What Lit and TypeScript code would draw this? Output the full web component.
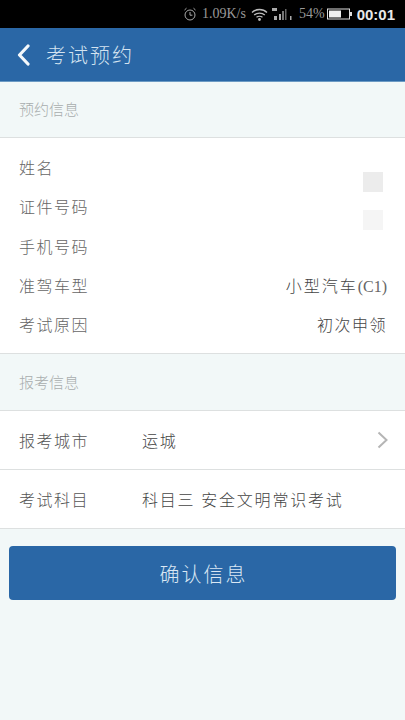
import { LitElement, html, css } from "lit";
import { customElement } from "lit/decorators.js";

@customElement("app-root")
export class AppRoot extends LitElement {
  static styles = css`
    :host { display: block; width: 405px; height: 720px; background: #f2f8f8; overflow: hidden;
      font-family: "Liberation Serif", "Noto Sans CJK SC", serif; font-weight: 300; color: #555; }
    .status { height: 28px; background: #000; display: flex; align-items: center; justify-content: flex-end; padding-right: 10px; color: #aaa; box-sizing: border-box; }
    .status .t { font: 14px "Liberation Serif", serif; color: #999; }
    .status .clock { font: bold 15px "Liberation Sans", sans-serif; color: #e8e8e8; margin-left: 5px; }
    .status svg { display: block; }
    .alarm { margin-right: 5px; }
    .wifi { margin: 0 4px 0 5px; }
    .sig { margin-right: 7px; }
    .bat { margin-left: 2px; }
    .head { height: 53px; background: #2a67a6; border-bottom: 1px solid #6d9bc4; display: flex; align-items: center; color: #d4e3f0; font-size: 20px; letter-spacing: 2px; padding-left: 17px; gap: 16px; }
    .sec { height: 56px; display: flex; align-items: center; padding: 0 0 2px 19px; font-size: 15px; color: #a8adad; border-bottom: 1px solid #dde0e0; box-sizing: border-box; }
    .sec.two { height: 57px; }
    .info { background: #fff; border-bottom: 1px solid #dde0e0; height: 216px; box-sizing: border-box; padding: 9px 19px 9px; display: flex; flex-direction: column; position: relative; }
    .row { flex: 1; display: flex; justify-content: space-between; align-items: center; font-size: 16px; letter-spacing: 1.5px; color: #666; }
    .row .v { color: #444; letter-spacing: 2px; margin-right: -1px; }
    .row .v.n { letter-spacing: 1.5px; }
    .row .v .lat { letter-spacing: 0; color: #666; }
    .sq { position: absolute; left: 363px; width: 20px; height: 20px; }
    .s1 { top: 34px; background: #ececec; }
    .s2 { top: 72px; background: #f5f5f5; }
    .form { background: #fff; }
    .f { height: 59px; box-sizing: border-box; border-bottom: 1px solid #dde0e0; display: flex; align-items: center; padding: 0 17px 0 19px; font-size: 16px; letter-spacing: 1.5px; color: #555; }
    .f .l { width: 123px; flex: none; }
    .f .c { flex: 1; color: #444; letter-spacing: 1.8px; }
    .btn { margin: 17px 9px 0; height: 54px; background: #2a67a6; border-radius: 4px; display: flex; align-items: center; justify-content: center; color: #dbe8f4; font-size: 20px; letter-spacing: 2px; }
    .btn span { margin-left: 2px; }
  `;

  render() {
    return html`
      <div class="status">
        <svg class="alarm" width="14" height="14" viewBox="0 0 14 14" fill="none" stroke="#aaa" stroke-width="1"><circle cx="7" cy="8" r="5"/><path d="M7 5v3.2h2.4M1.5 3 3.500 1.200M12.500 3l-2-1.800"/></svg>
        <span class="t">1.09K/s</span>
        <svg class="wifi" width="17" height="13" viewBox="0 0 17 13" fill="none" stroke="#bbb" stroke-width="1.300"><path d="M1 4.500c4-4 11-4 15 0M3.200 7c2.800-2.600 7.800-2.600 10.600 0M5.500 9.300c1.600-1.300 4.400-1.300 6 0"/><circle cx="8.500" cy="11.500" r=".8" fill="#bbb"/></svg>
        <svg class="sig" width="20" height="14" viewBox="0 0 20 14" fill="#aaa"><rect x="0" y="1" width="5" height="3"/><rect x="2" y="9" width="3" height="4"/><rect x="7" y="7" width="2" height="6"/><rect x="10" y="4" width="2" height="9" fill="#777"/><rect x="13" y="2" width="1.500" height="11" fill="#666"/><rect x="18" y="9" width="1.500" height="4"/></svg>
        <span class="t">54%</span>
        <svg class="bat" width="25" height="12" viewBox="0 0 25 12"><rect x=".5" y="1" width="22" height="10" fill="none" stroke="#ddd"/><rect x="2" y="2.500" width="12" height="7" fill="#eee"/><rect x="23" y="4" width="2" height="4" fill="#ddd"/></svg>
        <span class="clock">00:01</span>
      </div>
      <div class="head">
        <svg width="13" height="22" viewBox="0 0 13 22" fill="none" stroke="#f4f8fb" stroke-width="3.200" stroke-linecap="round" stroke-linejoin="round"><path d="M11 2 2.500 11 11 20"/></svg>
        <span>考试预约</span>
      </div>
      <div class="sec">预约信息</div>
      <div class="info">
        <div class="row"><span>姓名</span></div>
        <div class="row"><span>证件号码</span></div>
        <div class="row"><span>手机号码</span></div>
        <div class="row"><span>准驾车型</span><span class="v">小型汽车<span class="lat">(C1)</span></span></div>
        <div class="row"><span>考试原因</span><span class="v n">初次申领</span></div>
        <div class="sq s1"></div>
        <div class="sq s2"></div>
      </div>
      <div class="sec two">报考信息</div>
      <div class="form">
        <div class="f"><span class="l">报考城市</span><span class="c">运城</span>
          <svg width="11" height="18" viewBox="0 0 11 18" fill="none" stroke="#b5b5b5" stroke-width="2"><path d="M1.500 1.500 9.500 9l-8 7.500"/></svg>
        </div>
        <div class="f"><span class="l">考试科目</span><span class="c">科目三 安全文明常识考试</span></div>
      </div>
      <div class="btn"><span>确认信息</span></div>
    `;
  }
}
